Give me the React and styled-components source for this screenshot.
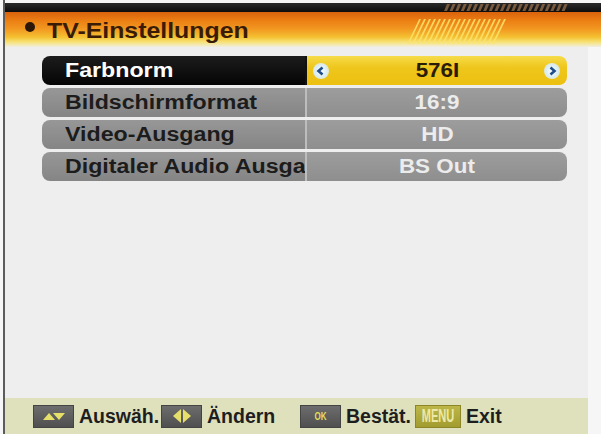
import React from 'react';
import styled, { createGlobalStyle } from 'styled-components';

const Global = createGlobalStyle`
  html, body {
    margin: 0;
    padding: 0;
    background: #f6f6f6;
  }
  * { box-sizing: border-box; }
`;

const Page = styled.div`
  width: 601px;
  height: 434px;
  padding-left: 3px;
  background: #f6f6f6;
  overflow: hidden;
  font-family: "Liberation Sans", Arial, sans-serif;
  font-weight: bold;
`;

const Frame = styled.div`
  height: 100%;
  border-left: 2px solid #5c5c5c;
  display: flex;
  flex-direction: column;
  padding-top: 3px;
  background: #f6f6f6;
`;

const TopBar = styled.div`
  height: 9px;
  background: linear-gradient(#2a2a2a, #0c0c0c);
  display: flex;
  align-items: center;
  padding-left: 433px;
`;

const Header = styled.div`
  height: 35px;
  display: flex;
  align-items: center;
  padding-left: 20px;
  background: linear-gradient(
    #d9620c 0%,
    #ec7f14 25%,
    #f29a22 50%,
    #f4c232 72%,
    #f6e27a 86%,
    #f1eee0 100%
  );
`;

const Bullet = styled.span`
  width: 10px;
  height: 10px;
  border-radius: 50%;
  background: #2b1608;
  margin-bottom: 6px;
  margin-right: 12px;
`;

const Title = styled.h1`
  margin: 0;
  font-size: 22px;
  color: #3a1c06;
  line-height: 1;
  margin-top: 3px;
  white-space: nowrap;
`;

// the receiver's OSD font is a horizontally stretched sans
const Wide = styled.span`
  display: inline-block;
  white-space: nowrap;
  transform: scaleX(${p => p.$sx || 1.15});
  transform-origin: ${p => (p.$center ? 'center' : 'left')} center;
`;

const Stripes = styled.svg`
  margin-left: auto;
  margin-right: 93px;
  margin-top: 4px;
`;

const Body = styled.div`
  flex: 1;
  width: 583px;
  background: #eeeeee;
  display: flex;
  flex-direction: column;
`;

const List = styled.div`
  display: flex;
  flex-direction: column;
  gap: 3px;
  padding: 9px 0 0 37px;
`;

const Row = styled.div`
  display: flex;
  height: 29px;
  width: 525px;
`;

const Label = styled.div`
  width: 265px;
  display: flex;
  align-items: center;
  padding-left: 23px;
  border-radius: 8px 0 0 8px;
  font-size: 20px;
  overflow: hidden;
  background: ${p => (p.$active ? 'linear-gradient(#1c1c1c, #050505)' : 'linear-gradient(#979797, #858585)')};
  color: ${p => (p.$active ? '#ffffff' : '#1c1c1c')};
  border-right: 2px solid ${p => (p.$active ? '#111' : '#bdbdbd')};
`;

const Value = styled.div`
  flex: 1;
  display: flex;
  align-items: center;
  justify-content: center;
  position: relative;
  border-radius: 0 8px 8px 0;
  font-size: 20px;
  background: ${p => (p.$active ? 'linear-gradient(#f6dc4a, #efc61c 40%, #ecc010)' : 'linear-gradient(#9d9d9d, #8e8e8e)')};
  color: ${p => (p.$active ? '#2a1c06' : '#ececec')};
`;

const ArrowDot = styled.span`
  position: absolute;
  top: 50%;
  ${p => (p.$side === 'left' ? 'left: 6px;' : 'right: 7px;')}
  width: 16px;
  height: 16px;
  margin-top: -8px;
  border-radius: 50%;
  background: radial-gradient(circle at 50% 50%, #ffffff 0%, #d8ecf4 55%, #f3e59a 100%);
  display: flex;
  align-items: center;
  justify-content: center;
`;

const Spacer = styled.div`
  flex: 1;
`;

const Footer = styled.div`
  height: 36px;
  background: #dfe1bd;
  display: flex;
  align-items: center;
  padding-left: 28px;
`;

const Hint = styled.div`
  display: flex;
  align-items: center;
  gap: 5px;
  margin-left: ${p => p.$gap}px;
`;

const Key = styled.span`
  width: ${p => p.$w || 41}px;
  height: 23px;
  display: flex;
  align-items: center;
  justify-content: center;
  background: ${p => (p.$menu ? 'linear-gradient(#bdb648, #a29c2e)' : 'linear-gradient(#6d6d6d, #4f4f4f)')};
  border: 1px solid ${p => (p.$menu ? '#8c8626' : '#444')};
  color: ${p => (p.$menu ? '#ece9a8' : '#e4df5a')};
  font-size: ${p => (p.$menu ? 11 : 8)}px;
`;

const KeyText = styled.span`
  display: inline-block;
  transform: scaleY(${p => p.$sy || 1});
`;

const HintText = styled.span`
  font-size: 19.5px;
  color: #1e1e1e;
  width: ${p => p.$w}px;
`;

const rows = [
  { label: 'Farbnorm', value: '576I', active: true },
  { label: 'Bildschirmformat', value: '16:9' },
  { label: 'Video-Ausgang', value: 'HD' },
  { label: 'Digitaler Audio Ausgabe', value: 'BS Out' },
];

const Chevron = ({ dir }) => (
  <svg width="10" height="10" viewBox="0 0 10 10">
    <path
      d={dir === 'left' ? 'M6.5 1.5 L2.5 5 L6.5 8.5' : 'M3.5 1.5 L7.5 5 L3.5 8.5'}
      fill="none"
      stroke="#1d4d8a"
      strokeWidth="2.6"
    />
  </svg>
);

const TopHatch = () => {
  const marks = [];
  for (let i = 0; i < 22; i++) {
    const x = 6 + i * 5.6;
    marks.push(<polygon key={i} points={`${x},8 ${x + 3},8 ${x + 6},1 ${x + 3},1`} fill="#7a5a3e" />);
  }
  return (
    <svg width="132" height="9" viewBox="0 0 132 9">
      {marks}
    </svg>
  );
};

const YellowHatch = () => {
  const marks = [];
  for (let i = 0; i < 22; i++) {
    const x = -10 + i * 5;
    marks.push(<polygon key={i} points={`${x},25 ${x + 2},25 ${x + 14},0 ${x + 12},0`} fill="#fbe46a" />);
  }
  return (
    <Stripes width="101" height="25" viewBox="0 0 101 25">
      <defs>
        <clipPath id="band">
          <polygon points="12,0 101,0 88,25 0,25" />
        </clipPath>
      </defs>
      <g clipPath="url(#band)" opacity="0.85">{marks}</g>
    </Stripes>
  );
};

const UpDownIcon = () => (
  <svg width="24" height="10" viewBox="0 0 24 10">
    <polygon points="1,9 7,2 13,9" fill="#e6e06a" />
    <polygon points="11,2 23,2 17,9" fill="#e6e06a" />
  </svg>
);

const LeftRightIcon = () => (
  <svg width="20" height="14" viewBox="0 0 20 14">
    <polygon points="1,7 9,0 9,14" fill="#e6e06a" />
    <polygon points="11,0 19,7 11,14" fill="#e6e06a" />
  </svg>
);

export default function App() {
  return (
    <Page>
      <Global />
      <Frame>
        <TopBar>
          <TopHatch />
        </TopBar>
        <Header>
          <Bullet />
          <Title>
            <Wide $sx={1.13}>TV-Einstellungen</Wide>
          </Title>
          <YellowHatch />
        </Header>
        <Body>
          <List>
            {rows.map(r => (
              <Row key={r.label}>
                <Label $active={r.active}>
                  <Wide $sx={1.16}>{r.label}</Wide>
                </Label>
                <Value $active={r.active}>
                  {r.active && (
                    <ArrowDot $side="left">
                      <Chevron dir="left" />
                    </ArrowDot>
                  )}
                  <Wide $sx={1.12} $center>
                    {r.value}
                  </Wide>
                  {r.active && (
                    <ArrowDot $side="right">
                      <Chevron dir="right" />
                    </ArrowDot>
                  )}
                </Value>
              </Row>
            ))}
          </List>
          <Spacer />
          <Footer>
            <Hint $gap={0}>
              <Key>
                <UpDownIcon />
              </Key>
              <HintText $w={80}>Auswäh.</HintText>
            </Hint>
            <Hint $gap={2}>
              <Key>
                <LeftRightIcon />
              </Key>
              <HintText $w={74}>Ändern</HintText>
            </Hint>
            <Hint $gap={19}>
              <Key>
                <KeyText $sy={1.4}>OK</KeyText>
              </Key>
              <HintText $w={66}>Bestät.</HintText>
            </Hint>
            <Hint $gap={3}>
              <Key $menu $w={46}>
                <KeyText $sy={1.6}>MENU</KeyText>
              </Key>
              <HintText>Exit</HintText>
            </Hint>
          </Footer>
        </Body>
      </Frame>
    </Page>
  );
}
